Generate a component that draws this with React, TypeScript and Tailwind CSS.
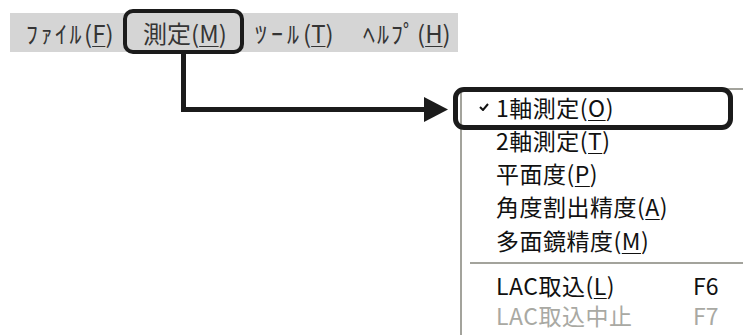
import React from 'react';

const font = { fontFamily: '"Noto Sans CJK JP", "Noto Sans", sans-serif' };

const MenuBarItem: React.FC<{ label: string; mn: string; w: string; track?: string }> = ({ label, mn, w, track = '' }) => (
  <div className={`${w} shrink-0 whitespace-nowrap`}>
    <span className={track}>{label}</span>
    (<span className="underline underline-offset-[3px] decoration-1">{mn}</span>)
  </div>
);

const MenuItem: React.FC<{ label: string; mn?: string; checked?: boolean; shortcut?: string; disabled?: boolean; h: string }> = ({
  label,
  mn,
  checked,
  shortcut,
  disabled,
  h,
}) => (
  <div className={`${h} flex items-center ${disabled ? 'text-[#a9a9a3]' : 'text-[#111]'}`}>
    <div className="w-[34px] flex justify-end pr-[7px]">
      {checked && (
        <svg width="10" height="8" viewBox="0 0 10 8">
          <path d="M1 4 L4 7 L9 1" stroke="#111" strokeWidth="2" fill="none" />
        </svg>
      )}
    </div>
    <div className="w-[197px] whitespace-nowrap tracking-[0.5px]">
      {label}
      {mn && (
        <>
          (<span className="underline underline-offset-[3px] decoration-1">{mn}</span>)
        </>
      )}
    </div>
    {shortcut && <div className="whitespace-nowrap">{shortcut}</div>}
  </div>
);

export default function App() {
  return (
    <div className="relative w-[743px] h-[335px] bg-white overflow-hidden" style={font}>
      {/* menu bar */}
      <div className="ml-[10px] mt-[13px] w-[448px] h-[39px] bg-[#d5d5d5] flex items-center pl-[16px] text-[24px] text-[#353535] leading-none">
        <MenuBarItem label="ﾌｧｲﾙ" mn="F" w="w-[117px]" track="tracking-[2.5px]" />
        <MenuBarItem label="測定" mn="M" w="w-[112px]" />
        <MenuBarItem label="ﾂｰﾙ" mn="T" w="w-[108px]" track="tracking-[4px]" />
        <MenuBarItem label="ﾍﾙﾌﾟ" mn="H" w="w-[90px]" track="tracking-[2px]" />
      </div>

      {/* dropdown menu */}
      <div className="ml-[460px] mt-[36px] w-[283px] h-[247px] bg-white border-l-2 border-t-2 border-[#a3a39c] text-[23px] leading-[28px] overflow-hidden">
        <MenuItem label="1軸測定" mn="O" checked h="h-[33px]" />
        <MenuItem label="2軸測定" mn="T" h="h-[33px]" />
        <MenuItem label="平面度" mn="P" h="h-[33px]" />
        <MenuItem label="角度割出精度" mn="A" h="h-[34px]" />
        <MenuItem label="多面鏡精度" mn="M" h="h-[33px]" />
        <div className="h-[14px] flex items-center pl-[8px]">
          <div className="w-full h-[2px] bg-[#a3a39c]" />
        </div>
        <MenuItem label="LAC取込" mn="L" shortcut="F6" h="h-[30px]" />
        <MenuItem label="LAC取込中止" shortcut="F7" disabled h="h-[30px]" />
      </div>

      {/* annotation: box around 測定 */}
      <div className="absolute left-[123px] top-[9px] w-[121px] h-[45px] border-[4px] border-[#1b1b1b] rounded-[10px]" />
      {/* annotation: box around 1軸測定 */}
      <div className="absolute left-[453px] top-[87px] w-[280px] h-[43px] border-[5px] border-[#1b1b1b] rounded-[11px]" />
      {/* annotation: arrow */}
      <svg className="absolute left-0 top-0" width="743" height="335" viewBox="0 0 743 335">
        <path d="M183.5 53 V109.5 H428" stroke="#1b1b1b" strokeWidth="5" fill="none" />
        <path d="M424 97 L448 109.5 L424 122 Z" fill="#1b1b1b" />
      </svg>
    </div>
  );
}
